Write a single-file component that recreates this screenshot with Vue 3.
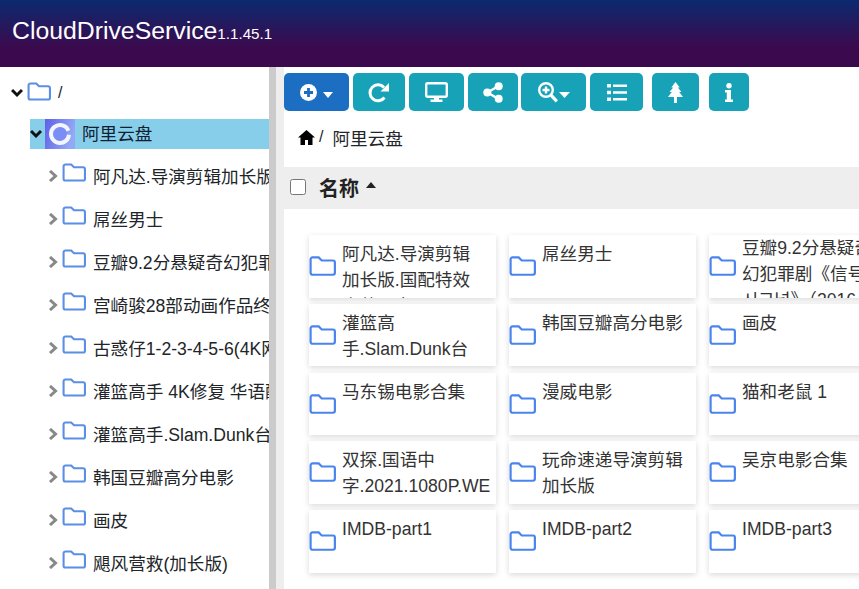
<template>
  <div class="app">
    <header class="top-bar">
      <span class="brand">CloudDriveService</span><span class="version">1.1.45.1</span>
    </header>

    <div class="main">
      <!-- дерево слева -->
      <aside class="tree">
        <div class="tree-row root">
          <svg class="chev" viewBox="0 0 12 12"><path d="M1 3l5 5 5-5" fill="none" stroke="#111" stroke-width="3"/></svg>
          <svg class="folder" viewBox="0 0 26 20"><path d="M1.500 3.500a2 2 0 0 1 2-2h6l3 3h9.500a2 2 0 0 1 2 2v10a2 2 0 0 1-2 2h-18.500a2 2 0 0 1-2-2z" fill="none" stroke="#5b8ee6" stroke-width="2.200"/></svg>
          <span class="slash">/</span>
        </div>

        <div class="tree-row drive">
          <div class="drive-label">
            <svg class="chev" viewBox="0 0 12 12"><path d="M1 3l5 5 5-5" fill="none" stroke="#111" stroke-width="3"/></svg>
            <svg class="drive-logo" viewBox="0 0 30 30">
              <defs>
                <linearGradient id="logoBg" x1="0" y1="0" x2="1" y2="0.300">
                  <stop offset="0" stop-color="#5f5fe8"/>
                  <stop offset="1" stop-color="#93a9f6"/>
                </linearGradient>
              </defs>
              <rect width="30" height="30" fill="url(#logoBg)"/>
              <circle cx="15" cy="15" r="7" fill="#7b8ef5"/>
              <circle cx="15" cy="15" r="9" fill="none" stroke="#f4f6ff" stroke-width="4" stroke-dasharray="52 4.500" transform="rotate(5 15 15)"/>
            </svg>
            <span class="drive-name">阿里云盘</span>
          </div>
        </div>

        <div v-for="name in treeItems" :key="name" class="tree-row child">
          <svg class="chev-right" viewBox="0 0 12 12"><path d="M3 1l5.500 5L3 11" fill="none" stroke="#888" stroke-width="3"/></svg>
          <svg class="folder" viewBox="0 0 26 20"><path d="M1.500 3.500a2 2 0 0 1 2-2h6l3 3h9.500a2 2 0 0 1 2 2v10a2 2 0 0 1-2 2h-18.500a2 2 0 0 1-2-2z" fill="none" stroke="#5b8ee6" stroke-width="2.200"/></svg>
          <span class="tree-name">{{ name }}</span>
        </div>
      </aside>

      <div class="gutter"></div>

      <section class="content">
        <div class="toolbar">
          <button class="btn primary w65">
            <svg width="17" height="17" viewBox="0 0 17 17"><circle cx="8.500" cy="8.500" r="8.500" fill="#fff"/><path d="M8.500 4v9M4 8.500h9" stroke="#1b6ec2" stroke-width="2.800"/></svg>
            <svg class="caret" width="10" height="6" viewBox="0 0 10 6"><path d="M0 0h10L5 6z" fill="#fff"/></svg>
          </button>
          <button class="btn w52">
            <svg width="22" height="21" viewBox="0 0 22 21"><path d="M16.500 15.500A8 8 0 1 1 16 5.500" fill="none" stroke="#fff" stroke-width="3"/><path d="M21 1v8.500h-8.500z" fill="#fff"/></svg>
          </button>
          <button class="btn w55">
            <svg width="23" height="20" viewBox="0 0 23 20"><rect x="1.200" y="1.200" width="20.600" height="13.600" rx="1.500" fill="none" stroke="#fff" stroke-width="2.400"/><path d="M9 15h5v3H9zM5.500 17.500h12V20h-12z" fill="#fff"/></svg>
          </button>
          <button class="btn w50">
            <svg width="20" height="21" viewBox="0 0 20 21"><path d="M15.500 4 4.500 10.500l11 6.500" fill="none" stroke="#fff" stroke-width="2.400"/><circle cx="15.700" cy="4.200" r="4" fill="#fff"/><circle cx="4.300" cy="10.500" r="4" fill="#fff"/><circle cx="15.700" cy="16.800" r="4" fill="#fff"/></svg>
          </button>
          <button class="btn w65 tight">
            <svg width="20" height="21" viewBox="0 0 20 21"><circle cx="8" cy="8" r="6.800" fill="none" stroke="#fff" stroke-width="2.400"/><path d="M12.800 12.800l6 6.500" stroke="#fff" stroke-width="3.200"/><path d="M8 4.500v7M4.500 8h7" stroke="#fff" stroke-width="2.400"/></svg>
            <svg class="caret" width="11" height="6" viewBox="0 0 11 6"><path d="M0 0h11L5.500 6z" fill="#fff"/></svg>
          </button>
          <button class="btn w53">
            <svg width="20" height="17" viewBox="0 0 20 17"><path d="M0 0h4v3.500H0zM0 6.700h4v3.500H0zM0 13.500h4V17H0zM6 .5h14V3H6zM6 7.200h14v2.500H6zM6 14h14v2.500H6z" fill="#fff"/></svg>
          </button>
          <button class="btn w47 push">
            <svg width="15" height="21" viewBox="0 0 15 21"><path d="M7.500 0l4.200 5.500H9.800l3.700 4.500H11.200l3.800 5H9v6H6v-6H0l3.800-5H1.500l3.700-4.500H3.300z" fill="#fff"/></svg>
          </button>
          <button class="btn w40 push-more">
            <svg width="8" height="19" viewBox="0 0 8 19"><circle cx="4" cy="2.700" r="2.700" fill="#fff"/><path d="M0 7h6v9.500h2V19H0v-2.500h1.800V9.500H0z" fill="#fff"/></svg>
          </button>
        </div>

        <nav class="crumbs">
          <svg width="17" height="15" viewBox="0 0 17 15"><path d="M8.500 0 17 7.500h-2.500V15H10v-5H7v5H2.500V7.500H0z" fill="#000"/></svg>
          <span class="sep">/</span>
          <span>阿里云盘</span>
        </nav>

        <div class="list-head">
          <input type="checkbox" class="check" />
          <span class="head-name">名称</span>
          <svg class="sort-caret" width="10" height="6" viewBox="0 0 10 6"><path d="M5 0l5 6H0z" fill="#222"/></svg>
        </div>

        <div class="cards">
          <div v-for="item in cards" :key="item.name" class="card">
            <svg class="card-folder" viewBox="0 0 28 21"><path d="M1.500 3.500a2 2 0 0 1 2-2h6.500l3.200 3.200h11.800a2 2 0 0 1 2 2v11a2 2 0 0 1-2 2h-21.500a2 2 0 0 1-2-2z" fill="none" stroke="#4a84ee" stroke-width="2.300"/></svg>
            <div class="card-name" :class="{ tall: item.tall }">{{ item.name }}</div>
          </div>
        </div>
      </section>
    </div>
  </div>
</template>

<script setup>
const treeItems = [
  '阿凡达.导演剪辑加长版.国配特效',
  '屌丝男士',
  '豆瓣9.2分悬疑奇幻犯罪剧《信号》',
  '宫崎骏28部动画作品终极收藏',
  '古惑仔1-2-3-4-5-6(4K网络版)',
  '灌篮高手 4K修复 华语配音版本',
  '灌篮高手.Slam.Dunk台配国语版',
  '韩国豆瓣高分电影',
  '画皮',
  '飓风营救(加长版)'
]

// переносы как на макете
const cards = [
  { name: '阿凡达.导演剪辑\n加长版.国配特效\n中英双字' },
  { name: '屌丝男士' },
  { name: '豆瓣9.2分悬疑奇\n幻犯罪剧《信号\n시그널》（2016', tall: true },
  { name: '灌篮高\n手.Slam.Dunk台' },
  { name: '韩国豆瓣高分电影' },
  { name: '画皮' },
  { name: '马东锡电影合集' },
  { name: '漫威电影' },
  { name: '猫和老鼠 1' },
  { name: '双探.国语中\n字.2021.1080P.WE' },
  { name: '玩命速递导演剪辑\n加长版' },
  { name: '吴京电影合集' },
  { name: 'IMDB-part1' },
  { name: 'IMDB-part2' },
  { name: 'IMDB-part3' }
]
</script>

<style>
html, body {
  overflow: hidden;
}
</style>

<style scoped>
.app {
  height: 589px;
  display: flex;
  flex-direction: column;
  overflow: hidden;
  font-family: "Liberation Sans", "Noto Sans CJK SC", sans-serif;
  color: #212529;
  background: #fff;
}

.top-bar {
  height: 67px;
  flex: none;
  display: flex;
  align-items: baseline;
  padding: 17px 0 0 12px;
  box-sizing: border-box;
  color: #fff;
  background: linear-gradient(180deg, #0b2a6f 0%, #3b0a4e 70%, #3b0a4e 100%);
}

.brand {
  font-size: 24.800px;
}

.version {
  font-size: 15.200px;
}

.main {
  flex: 1;
  display: flex;
  min-height: 0;
}

/* дерево */
.tree {
  width: 269px;
  flex: none;
  padding-top: 4px;
  overflow: hidden;
  font-size: 17.6px;
}

.tree-row {
  height: 43px;
  display: flex;
  align-items: center;
  white-space: nowrap;
}

.root {
  padding-left: 11px;
}

.root .folder {
  margin: 0 0 3px 4px;
}

.drive {
  height: 40px;
  padding-left: 30px;
}

.child {
  padding-left: 47px;
}

.chev {
  width: 12px;
  height: 12px;
  flex: none;
}

.chev-right {
  width: 12px;
  height: 12px;
  flex: none;
}

.folder {
  width: 25px;
  height: 19px;
  flex: none;
  margin: 0 0 6px 3px;
}

.slash {
  margin-left: 6px;
  font-size: 16px;
}

.tree-name {
  margin: 0 0 1px 6px;
}

.drive-label {
  flex: 1;
  height: 30px;
  display: flex;
  align-items: center;
  background: #87ceeb;
}

.drive-logo {
  width: 30px;
  height: 30px;
  margin-left: 3px;
  flex: none;
}

.drive-name {
  margin: 0 0 4px 7px;
  color: #102030;
}

.gutter {
  width: 7px;
  flex: none;
  background: #cbcbcb;
  border-right: 8px solid #eee;
}

/* правая часть */
.content {
  flex: 1;
  min-width: 0;
  overflow: hidden;
}

.toolbar {
  display: flex;
  gap: 4px;
  margin-top: 6px;
}

.btn {
  height: 38px;
  flex: none;
  display: flex;
  align-items: center;
  justify-content: center;
  gap: 1px;
  padding: 0;
  border: 0;
  border-radius: 5px;
  background: #17a2b8;
}

.btn.primary {
  gap: 6px;
  background: #1b6ec2;
}

.w65 { width: 65px; }
.w52 { width: 52px; }
.w55 { width: 55px; }
.w50 { width: 50px; }
.w53 { width: 53px; }
.w47 { width: 47px; }
.w40 { width: 40px; }

.tight {
  margin-left: -1px;
}

.push {
  margin-left: 5px;
}

.push-more {
  margin-left: 6px;
}

.caret {
  margin-top: 6px;
}

.crumbs {
  height: 56px;
  display: flex;
  align-items: center;
  box-sizing: border-box;
  padding: 0 0 4px 14px;
  font-size: 17.6px;
}

.sep {
  margin: 0 9px 0 4px;
  font-size: 16px;
}

.list-head {
  height: 42px;
  display: flex;
  align-items: center;
  box-sizing: border-box;
  background: #eee;
  padding: 0 0 2px 6px;
  color: #222;
}

.check {
  width: 16px;
  height: 16px;
  margin: 0;
}

.head-name {
  margin: 0 7px 0 13px;
  font-size: 20px;
  font-weight: 700;
}

.sort-caret {
  margin-bottom: 5px;
}

.cards {
  display: grid;
  grid-template-columns: repeat(3, 187px);
  grid-auto-rows: 62.500px;
  column-gap: 13px;
  row-gap: 6.250px;
  padding: 26px 0 0 25px;
}

.card {
  display: flex;
  align-items: flex-start;
  overflow: hidden;
  background: #fff;
  box-shadow: 0 2px 6px rgba(0, 0, 0, 0.15);
}

.card-folder {
  width: 27px;
  height: 20px;
  flex: none;
  margin-top: 21px;
}

.card-name {
  margin: 6px 0 0 6px;
  width: 160px;
  flex: none;
  font-size: 17.6px;
  line-height: 26px;
  color: #333;
  white-space: pre-line;
}

.card-name.tall {
  margin-top: 0;
}
</style>
